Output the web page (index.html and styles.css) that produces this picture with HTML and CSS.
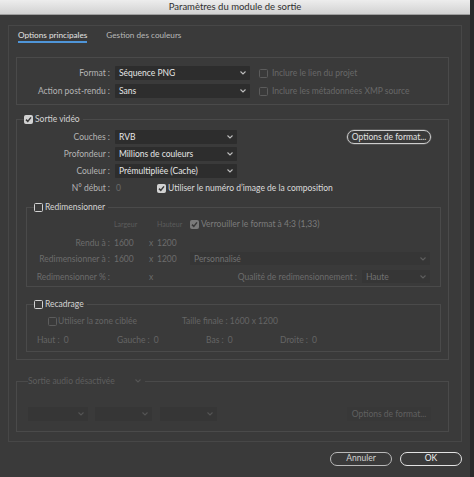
FILE: index.html
```html
<!DOCTYPE html>
<html lang="fr">
<head>
<meta charset="utf-8">
<title>Paramètres du module de sortie</title>
<link rel="stylesheet" href="styles.css">
</head>
<body>
<div class="window">
  <div class="titlebar">Paramètres du module de sortie</div>
  <div class="panel">
    <div class="tabs">
      <span class="tab active">Options principales</span>
      <span class="tab">Gestion des couleurs</span>
    </div>

    <div class="format-box">
      <div class="row">
        <span class="lbl">Format :</span>
        <span class="select w-main">Séquence PNG<svg class="chev" viewBox="0 0 6 4"><polyline points="0.5,0.5 3,3 5.5,0.5"/></svg></span>
        <span class="cb dis ml9"></span><span class="dis-text ml4">Inclure le lien du projet</span>
      </div>
      <div class="row">
        <span class="lbl">Action post-rendu :</span>
        <span class="select w-main">Sans<svg class="chev" viewBox="0 0 6 4"><polyline points="0.5,0.5 3,3 5.5,0.5"/></svg></span>
        <span class="cb dis ml9"></span><span class="dis-text ml4">Inclure les métadonnées XMP source</span>
      </div>
    </div>

    <fieldset class="video">
      <legend><span class="leg"><span class="cb on"><svg viewBox="0 0 9 9"><path d="M2 4.6 L3.8 6.4 L7 2.4"/></svg></span><span class="leg-text">Sortie vidéo</span></span></legend>
      <div class="vrows">
        <div class="row">
          <span class="lbl">Couches :</span>
          <span class="select w-video">RVB<svg class="chev" viewBox="0 0 6 4"><polyline points="0.5,0.5 3,3 5.5,0.5"/></svg></span>
          <span class="btn-opt">Options de format...</span>
        </div>
        <div class="row">
          <span class="lbl">Profondeur :</span>
          <span class="select w-video">Millions de couleurs<svg class="chev" viewBox="0 0 6 4"><polyline points="0.5,0.5 3,3 5.5,0.5"/></svg></span>
        </div>
        <div class="row">
          <span class="lbl">Couleur :</span>
          <span class="select w-video">Prémultipliée (Cache)<svg class="chev" viewBox="0 0 6 4"><polyline points="0.5,0.5 3,3 5.5,0.5"/></svg></span>
        </div>
        <div class="row">
          <span class="lbl">N° début :</span>
          <span class="start-val">0</span>
          <span class="cb on"><svg viewBox="0 0 9 9"><path d="M2 4.6 L3.8 6.4 L7 2.4"/></svg></span>
          <span class="val-text ml2">Utiliser le numéro d’image de la composition</span>
        </div>
      </div>

      <fieldset class="sub redim">
        <legend><span class="leg"><span class="cb"></span><span class="leg-text">Redimensionner</span></span></legend>
        <div class="row hdr">
          <span class="lbl2"></span>
          <span class="col1 tiny">Largeur</span>
          <span class="xcol"></span>
          <span class="col2 tiny">Hauteur</span>
          <span class="cb dis on"><svg viewBox="0 0 9 9"><path d="M2 4.6 L3.8 6.4 L7 2.4"/></svg></span>
          <span class="dim-hi ml2">Verrouiller le format à 4:3 (1,33)</span>
        </div>
        <div class="row r-rendu">
          <span class="lbl2">Rendu à :</span>
          <span class="col1">1600</span>
          <span class="xcol">x</span>
          <span class="col2">1200</span>
        </div>
        <div class="row r-redim">
          <span class="lbl2">Redimensionner à :</span>
          <span class="col1">1600</span>
          <span class="xcol">x</span>
          <span class="col2">1200</span>
          <span class="select dsel w-perso">Personnalisé<svg class="chev" viewBox="0 0 6 4"><polyline points="0.5,0.5 3,3 5.5,0.5"/></svg></span>
        </div>
        <div class="row r-pct">
          <span class="lbl2">Redimensionner % :</span>
          <span class="col1"></span>
          <span class="xcol">x</span>
          <span class="qual">Qualité de redimensionnement :</span>
          <span class="select dsel w-haute">Haute<svg class="chev" viewBox="0 0 6 4"><polyline points="0.5,0.5 3,3 5.5,0.5"/></svg></span>
        </div>
      </fieldset>

      <fieldset class="sub crop">
        <legend><span class="leg"><span class="cb"></span><span class="leg-text">Recadrage</span></span></legend>
        <div class="row c1">
          <span class="zone"><span class="cb dis"></span><span class="ml1">Utiliser la zone ciblée</span></span>
          <span>Taille finale : 1600 x 1200</span>
        </div>
        <div class="row c2">
          <span class="side s-haut">Haut :<span class="v">0</span></span>
          <span class="side s-gauche">Gauche :<span class="v">0</span></span>
          <span class="side s-bas">Bas :<span class="v">0</span></span>
          <span class="side">Droite :<span class="v">0</span></span>
        </div>
      </fieldset>
    </fieldset>

    <fieldset class="audio">
      <legend><span class="leg audio-leg">Sortie audio désactivée<svg class="chev" viewBox="0 0 6 4"><polyline points="0.5,0.5 3,3 5.5,0.5"/></svg></span></legend>
      <div class="row arow">
        <span class="select asel a1"><svg class="chev" viewBox="0 0 6 4"><polyline points="0.5,0.5 3,3 5.5,0.5"/></svg></span>
        <span class="select asel a2"><svg class="chev" viewBox="0 0 6 4"><polyline points="0.5,0.5 3,3 5.5,0.5"/></svg></span>
        <span class="select asel a3"><svg class="chev" viewBox="0 0 6 4"><polyline points="0.5,0.5 3,3 5.5,0.5"/></svg></span>
        <span class="btn-opt-dis">Options de format...</span>
      </div>
    </fieldset>
  </div>

  <div class="actions">
    <span class="btn">Annuler</span>
    <span class="btn ok">OK</span>
  </div>
</div>
</body>
</html>
```

FILE: styles.css
```css
* { box-sizing: border-box; }
html, body { margin: 0; padding: 0; }
body {
  width: 474px;
  height: 477px;
  overflow: hidden;
  background: #2a2a2a;
  font-family: Lato, "Open Sans", sans-serif;
  font-size: 8.5px;
  color: #b4b4b4;
}
.window {
  width: 470px;
  height: 477px;
  background: #3a3a3a;
  overflow: hidden;
}
.titlebar {
  height: 15px;
  line-height: 14px;
  text-align: center;
  font-size: 9.5px;
  color: #2f2f2f;
  background: linear-gradient(#ededed, #d2d2d2);
  border-bottom: 1px solid #9e9e9e;
}
.panel {
  margin: 10px 0 0 8px;
  width: 454px;
  height: 417px;
  border: 1px solid #474747;
}
.tabs {
  display: flex;
  gap: 19px;
  padding: 4px 0 0 9px;
}
.tab {
  font-size: 8.2px;
  line-height: 11px;
  color: #b8b8b8;
  border-bottom: 2px solid transparent;
}
.tab.active {
  color: #e4e4e4;
  border-bottom-color: #4f95d8;
}

.row {
  display: flex;
  align-items: center;
  height: 14px;
  white-space: nowrap;
}
.lbl {
  width: 98px;
  flex: none;
  text-align: right;
  padding-right: 5px;
}
.select {
  height: 14px;
  flex: none;
  display: flex;
  align-items: center;
  justify-content: space-between;
  padding: 0 4px;
  background: #2d2d2d;
  color: #e6e6e6;
  border-radius: 1px;
}
.chev {
  width: 6px;
  height: 4px;
  flex: none;
}
.chev polyline {
  fill: none;
  stroke: #bdbdbd;
  stroke-width: 1.1;
}
.w-main { width: 135px; }
.w-video { width: 122px; }

.cb {
  width: 9px;
  height: 9px;
  flex: none;
  border: 1px solid #d2d2d2;
  border-radius: 1.5px;
  display: inline-block;
}
.cb svg {
  display: block;
  width: 9px;
  height: 9px;
  margin: -1px 0 0 -1px;
}
.cb svg path {
  fill: none;
  stroke: #3a3a3a;
  stroke-width: 1.5;
}
.cb.on { background: #d2d2d2; }
.cb.dis { border-color: #5c5c5c; }
.cb.dis.on { background: #7a7a7a; border-color: #7a7a7a; }

.ml1 { margin-left: 1px; }
.ml2 { margin-left: 2px; }
.ml4 { margin-left: 4px; }
.ml9 { margin-left: 9px; }
.dis-text { color: #686868; }
.val-text { color: #dcdcdc; }

.format-box {
  margin: 14px 0 0 7px;
  width: 433px;
  height: 48px;
  border: 1px solid #4a4a4a;
  padding-top: 8px;
  display: flex;
  flex-direction: column;
  gap: 4px;
}

fieldset {
  margin: 0;
  padding: 0;
  min-width: 0;
  border: 1px solid #4a4a4a;
}
legend {
  padding: 0 3px 0 0;
  margin-left: 7px;
  height: 12px;
  line-height: 12px;
}
.leg {
  display: flex;
  align-items: center;
  height: 12px;
  gap: 2px;
}
.leg-text { color: #d4d4d4; }

.video {
  margin: 8px 0 0 7px;
  width: 433px;
  padding: 5px 0 7px;
}
.vrows {
  display: flex;
  flex-direction: column;
  gap: 3px;
}
.btn-opt {
  margin-left: auto;
  margin-right: 17px;
  width: 84px;
  height: 14px;
  line-height: 12px;
  text-align: center;
  color: #e2e2e2;
  border: 1px solid #cdcdcd;
  border-radius: 7px;
  box-shadow: 0 0 0 0.6px #6c6c6c;
}
.start-val {
  width: 42px;
  flex: none;
  padding-left: 1px;
  color: #6a6a6a;
}

.sub {
  width: 415px;
  margin-left: 9px;
}
.redim {
  margin-top: 6px;
  padding: 6px 0 3px;
  color: #6c6c6c;
}
.lbl2 {
  width: 83px;
  flex: none;
  text-align: right;
}
.col1 {
  width: 32px;
  flex: none;
  margin-left: 4px;
}
.xcol {
  width: 10px;
  flex: none;
  text-align: center;
}
.col2 {
  width: 34px;
  flex: none;
  padding-left: 1px;
}
.tiny {
  font-size: 7px;
  color: #5c5c5c;
}
.hdr { height: 10px; }
.dim-hi { color: #7c7c7c; }
.r-rendu { margin-top: 7px; height: 13px; }
.r-redim { margin-top: 3px; height: 13px; }
.r-pct { margin-top: 5px; height: 13px; }
.dsel {
  background: #363636;
  color: #727272;
  height: 13px;
}
.dsel .chev polyline { stroke: #5e5e5e; }
.w-perso { width: 240px; }
.qual {
  margin-left: auto;
  margin-right: 5px;
}
.w-haute { width: 68px; margin-right: 10px; }

.crop {
  margin-top: 11px;
  padding: 5px 0 5px;
  color: #656565;
}
.c1 { height: 12px; }
.zone {
  display: flex;
  align-items: center;
  width: 134px;
  margin-left: 21px;
}
.c2 {
  height: 12px;
  margin-top: 7px;
  padding-left: 10px;
}
.side { flex: none; }
.side .v { margin-left: 4px; }
.s-haut { width: 80px; }
.s-gauche { width: 89px; }
.s-bas { width: 74px; }

.audio {
  margin: 15px 0 0 7px;
  width: 433px;
  padding: 20px 0 10px;
}
.audio legend { margin-left: 11px; padding-right: 4px; }
.audio-leg {
  gap: 20px;
  color: #5e5e5e;
}
.audio-leg .chev polyline { stroke: #555; }
.arow { height: 14px; }
.asel {
  background: #363636;
  justify-content: flex-end;
}
.asel .chev polyline { stroke: #545454; }
.a1 { width: 60px; margin-left: 11px; }
.a2 { width: 57px; margin-left: 7px; }
.a3 { width: 57px; margin-left: 8px; }
.btn-opt-dis {
  margin-left: auto;
  margin-right: 17px;
  width: 84px;
  height: 14px;
  line-height: 14px;
  text-align: center;
  color: #606060;
  background: #383838;
}

.actions {
  display: flex;
  justify-content: flex-end;
  gap: 8px;
  margin-top: 10px;
  padding-right: 8px;
}
.btn {
  width: 62px;
  height: 14px;
  line-height: 11px;
  text-align: center;
  color: #d2d2d2;
  border: 1.5px solid #b9b9b9;
  border-radius: 8px;
}
.btn.ok {
  color: #f0f0f0;
  border-color: #e2e2e2;
}
```
